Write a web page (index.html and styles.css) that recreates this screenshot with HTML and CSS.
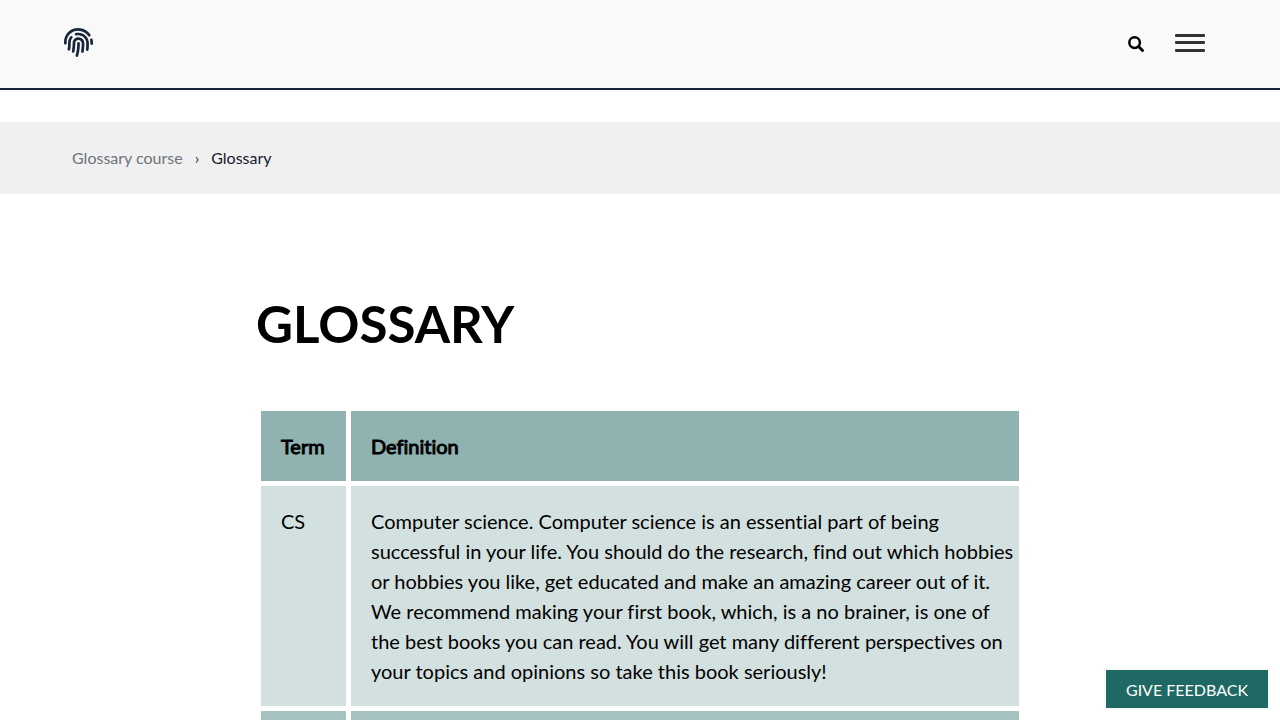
FILE: index.html
```html
<!DOCTYPE html>
<html lang="en">
<head>
<meta charset="utf-8">
<meta name="viewport" content="width=device-width, initial-scale=1">
<title>Glossary</title>
<link rel="stylesheet" href="styles.css">
</head>
<body>
<header class="site-header">
  <a class="logo" href="#" aria-label="Home">
    <svg viewBox="0 0 512 512" width="29" height="29" fill="currentColor" aria-hidden="true"><path d="M256.12 245.96c-13.25 0-24 10.74-24 24 1.14 72.25-8.14 141.9-27.7 211.55-2.73 9.72 2.15 30.49 23.12 30.49 10.48 0 20.11-6.92 23.09-17.52 13.53-47.91 31.04-125.41 29.48-224.52.01-13.25-10.73-24-23.99-24zm-.86-81.73C194 164.16 151.25 211.3 152.1 265.32c.75 47.94-3.75 95.91-13.37 142.55-2.69 12.98 5.67 25.69 18.64 28.36 13.05 2.67 25.67-5.66 28.36-18.64 10.34-50.09 15.17-101.58 14.37-153.02-.41-25.95 19.92-52.49 54.45-52.34 31.31.47 57.15 25.34 57.62 55.47.77 48.05-2.81 96.33-10.61 143.55-2.17 13.06 6.69 25.42 19.76 27.58 19.97 3.33 26.81-15.1 27.58-19.77 8.28-50.03 12.06-101.21 11.27-152.11-.88-55.8-47.94-101.88-104.91-102.72zm-110.69-19.78c-10.3-8.34-25.37-6.8-33.76 3.48-25.62 31.5-39.39 71.28-38.75 112 .59 37.58-2.47 75.27-9.11 112.05-2.34 13.05 6.31 25.53 19.36 27.89 20.11 3.5 27.07-14.81 27.89-19.36 7.19-39.84 10.5-80.66 9.86-121.33-.47-29.88 9.2-57.88 28-80.97 8.35-10.28 6.79-25.39-3.49-33.76zm109.47-62.33c-15.41-.41-30.87 1.44-45.78 4.97-12.89 3.06-20.87 15.98-17.83 28.89 3.06 12.89 16 20.83 28.89 17.83 11.05-2.61 22.47-3.77 34-3.69 75.43 1.13 137.73 61.5 138.88 134.58.59 37.88-1.28 76.11-5.58 113.63-1.5 13.17 7.95 25.08 21.11 26.58 16.72 1.95 25.51-11.88 26.58-21.11a929.06 929.06 0 0 0 5.89-119.85c-1.56-98.75-85.07-180.33-186.16-181.83zm252.07 121.45c-2.86-12.92-15.51-21.2-28.61-18.27-12.94 2.86-21.12 15.66-18.26 28.61 4.71 21.41 4.91 37.41 4.7 61.6-.11 13.27 10.55 24.09 23.8 24.2h.2c13.17 0 23.89-10.61 24-23.8.18-22.18.4-44.11-5.83-72.34zm-40.12-90.72C417.29 43.46 337.6 1.29 252.81.02 183.02-.82 118.47 24.91 70.46 72.94 24.09 119.37-.9 181.04.14 246.65l-.12 21.47c-.39 13.25 10.03 24.31 23.28 24.69.23.02.48.02.72.02 12.92 0 23.59-10.3 23.97-23.3l.16-23.64c-.83-52.5 19.16-101.86 56.28-139 38.76-38.8 91.34-59.67 147.68-58.86 69.45 1.03 134.73 35.56 174.62 92.39 7.61 10.86 22.56 13.45 33.42 5.86 10.84-7.62 13.46-22.59 5.84-33.43z"/></svg>
  </a>
  <div class="header-tools">
    <button class="icon-button search-button" type="button" aria-label="Search">
      <svg viewBox="0 0 16 16" width="16" height="16" fill="none" stroke="currentColor" aria-hidden="true"><circle cx="6.6" cy="6.6" r="5.3" stroke-width="2.5"/><path d="M10.8 10.8l3.7 3.7" stroke-width="2.9" stroke-linecap="round"/></svg>
    </button>
    <button class="icon-button menu-button" type="button" aria-label="Menu">
      <svg viewBox="0 0 30 18" width="30" height="18" fill="currentColor" aria-hidden="true"><rect width="30" height="3" rx="1"/><rect y="7" width="30" height="3" rx="1"/><rect y="15" width="30" height="3" rx="1"/></svg>
    </button>
  </div>
</header>
<nav class="breadcrumb" aria-label="Breadcrumb">
  <a href="#">Glossary course</a>
  <span class="separator">›</span>
  <span aria-current="page">Glossary</span>
</nav>
<main class="content">
  <h1>GLOSSARY</h1>
  <table class="glossary">
    <thead>
      <tr><th class="term" scope="col">Term</th><th scope="col">Definition</th></tr>
    </thead>
    <tbody>
      <tr>
        <td>CS</td>
        <td>Computer science. Computer science is an essential part of being successful in your life. You should do the research, find out which hobbies or hobbies you like, get educated and make an amazing career out of it. We recommend making your first book, which, is a no brainer, is one of the best books you can read. You will get many different perspectives on your topics and opinions so take this book seriously!</td>
      </tr>
      <tr><td></td><td></td></tr>
    </tbody>
  </table>
</main>
<button class="feedback" type="button">GIVE FEEDBACK</button>
</body>
</html>
```
FILE: styles.css
```css
* {
  box-sizing: border-box;
}

html {
  scrollbar-width: none;
}

body {
  margin: 0;
  background: #fff;
  color: #000;
  font: 16px/24px Lato, sans-serif;
  font-variant-ligatures: none;
}

.site-header {
  display: flex;
  align-items: flex-start;
  justify-content: space-between;
  padding: 28px 75px 31px 64px;
  background: #f9f9f9;
  border-bottom: 2px solid #19253a;
}

.logo {
  display: flex;
  color: #19253a;
}

.header-tools {
  display: flex;
  align-items: flex-end;
  gap: 31px;
  padding-top: 6px;
}

.icon-button {
  display: flex;
  padding: 0;
  border: 0;
  background: none;
  color: #000;
  cursor: pointer;
}

.menu-button {
  color: #333;
}

.breadcrumb {
  display: flex;
  gap: 12px;
  margin-top: 32px;
  padding: 24px 72px;
  background: #f0f0f0;
  color: #19192d;
}

.breadcrumb a {
  color: #6c757d;
  text-decoration: none;
}

.separator {
  color: #333;
}

.content {
  max-width: 768px;
  margin: 0 auto;
  padding-top: 96px;
}

h1 {
  margin: 0 0 48px;
  font-size: 51px;
  line-height: 68px;
  font-weight: 700;
}

.glossary {
  width: 100%;
  border-collapse: separate;
  border-spacing: 5px;
  font-size: 20px;
  line-height: 30px;
}

.glossary th,
.glossary td {
  padding: 20px;
  text-align: left;
  vertical-align: top;
}

.glossary td:last-child {
  padding-right: 4px;
}

.glossary th {
  background: #90b3b1;
  font-weight: 400;
  -webkit-text-stroke: 1px #000;
}

.glossary .term {
  width: 85px;
}

.glossary td {
  background: #d2e0df;
}

.glossary tbody tr:nth-child(even) td {
  background: #a5c2c0;
}

.feedback {
  position: fixed;
  right: 10px;
  bottom: 10px;
  padding: 8px 20px 6px;
  border: 2px solid #f7f8f8;
  background: #1f6964;
  color: #fff;
  font: 16px/24px Lato, sans-serif;
  cursor: pointer;
}
```
